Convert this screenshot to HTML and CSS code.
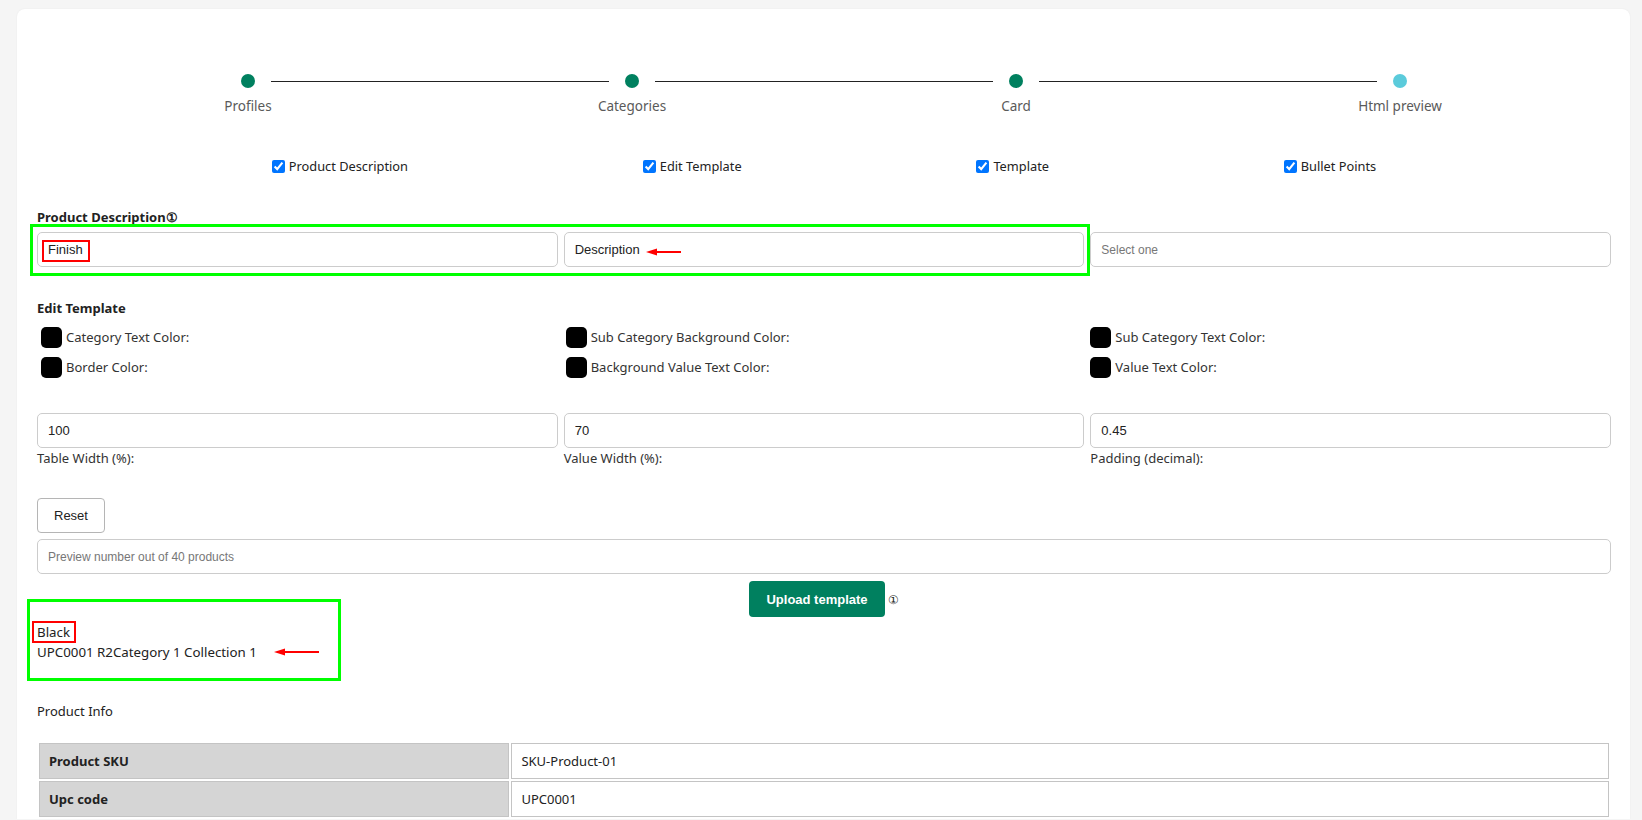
FILE: index.html
```html
<!DOCTYPE html>
<html lang="en">
<head>
	<meta charset="UTF-8">
	<title>Template preview</title>
	<link rel="stylesheet" href="styles.css">
</head>
<body>
	<section class="card">
		<ul class="stepper">
			<li class="step done"><span class="dot"></span><span class="step-name">Profiles</span></li>
			<li class="step done"><span class="dot"></span><span class="step-name">Categories</span></li>
			<li class="step done"><span class="dot"></span><span class="step-name">Card</span></li>
			<li class="step current"><span class="dot"></span><span class="step-name">Html preview</span></li>
		</ul>

		<div class="checks">
			<label class="check"><input type="checkbox" checked>Product Description</label>
			<label class="check"><input type="checkbox" checked>Edit Template</label>
			<label class="check"><input type="checkbox" checked>Template</label>
			<label class="check"><input type="checkbox" checked>Bullet Points</label>
		</div>

		<h4 class="title">Product Description&#9312;</h4>
		<div class="grid3 desc-row">
			<input class="field" type="text" value="Finish">
			<input class="field" type="text" value="Description">
			<input class="field" type="text" placeholder="Select one">
			<!-- annotation marks -->
			<div class="mark-green desc-mark"></div>
			<div class="mark-red finish-mark"></div>
			<svg class="arrow desc-arrow" width="36" height="10" viewBox="0 0 36 10"><path d="M10 5H35" stroke="#f00" stroke-width="2"/><path d="M0 5L11 1.5V8.5Z" fill="#f00"/></svg>
		</div>

		<h4 class="title title-edit">Edit Template</h4>
		<div class="grid3 colors">
			<div class="color-item"><span class="swatch"></span>Category Text Color:</div>
			<div class="color-item"><span class="swatch"></span>Sub Category Background Color:</div>
			<div class="color-item"><span class="swatch"></span>Sub Category Text Color:</div>
			<div class="color-item"><span class="swatch"></span>Border Color:</div>
			<div class="color-item"><span class="swatch"></span>Background Value Text Color:</div>
			<div class="color-item"><span class="swatch"></span>Value Text Color:</div>
		</div>

		<div class="grid3 sizes">
			<input class="field" type="text" value="100">
			<input class="field" type="text" value="70">
			<input class="field" type="text" value="0.45">
			<span class="field-label">Table Width (%):</span>
			<span class="field-label">Value Width (%):</span>
			<span class="field-label">Padding (decimal):</span>
		</div>

		<button class="btn btn-reset">Reset</button>
		<input class="field field-wide" type="text" placeholder="Preview number out of 40 products">

		<div class="upload-row">
			<button class="btn btn-upload">Upload template</button>
			<span class="info">&#9312;</span>
		</div>

		<div class="result">
			<div class="result-line">Black</div>
			<div class="result-line">UPC0001 R2Category 1 Collection 1</div>
			<div class="mark-green result-mark"></div>
			<div class="mark-red black-mark"></div>
			<svg class="arrow result-arrow" width="46" height="10" viewBox="0 0 46 10"><path d="M10 5H45" stroke="#f00" stroke-width="2"/><path d="M0 5L11 1.5V8.5Z" fill="#f00"/></svg>
		</div>

		<p class="info-title">Product Info</p>
		<table class="info-table">
			<tr><th>Product SKU</th><td>SKU-Product-01</td></tr>
			<tr><th>Upc code</th><td>UPC0001</td></tr>
		</table>
	</section>
</body>
</html>
```

FILE: styles.css
```css
body{
	margin:0;
	background:#f5f5f5;
	font-family:"Noto Sans","Open Sans",sans-serif;
	color:#222;
}
ul,li{
	margin:0;
	padding:0;
	list-style:none;
}
.card{
	margin:9px 12px 0 17px;
	padding:0 19px 0 20px;
	background:#fff;
	border-radius:8px 8px 0 0;
	box-shadow:0 0 2px rgba(0,0,0,0.06);
}

/* stepper */
.stepper{
	display:flex;
	margin:0 19px;
	padding-top:65px;
}
.step{
	position:relative;
	flex:1;
	display:flex;
	flex-direction:column;
	align-items:center;
}
.step::after{
	content:'';
	position:absolute;
	top:7px;
	left:calc(50% + 23px);
	right:calc(-50% + 23px);
	height:1px;
	background:#222;
}
.step:last-child::after{
	display:none;
}
.dot{
	width:14px;
	height:14px;
	border-radius:50%;
	background:#00805f;
}
.step.current .dot{
	background:#5bcbdb;
}
.step-name{
	margin-top:8px;
	font-size:13.5px;
	line-height:20px;
	color:#5a5a5a;
}

/* checkbox row */
.checks{
	display:flex;
	justify-content:space-evenly;
	margin-top:40px;
}
.check{
	display:flex;
	align-items:center;
	font-size:12.8px;
	line-height:20px;
}
.check input{
	width:13px;
	height:13px;
	margin:0 4px 0 0;
}

.title{
	margin:32px 0 0;
	font-size:13px;
	line-height:18px;
	font-weight:bold;
}
.grid3{
	display:grid;
	grid-template-columns:1fr 1fr 1fr;
}
.desc-row{
	position:relative;
	column-gap:6px;
	margin-top:6px;
}
.field{
	min-width:0;
	height:35px;
	padding:0 10px;
	box-sizing:border-box;
	border:1px solid #ccc;
	border-radius:5px;
	font-family:"Liberation Sans",Arial,sans-serif;
	font-size:13px;
	color:#222;
	outline:none;
}
.field::placeholder{
	color:#777;
	font-size:12px;
}

/* annotation marks */
.mark-green{
	position:absolute;
	border:3px solid #00ff00;
	box-sizing:border-box;
}
.mark-red{
	position:absolute;
	border:2px solid #f00;
	box-sizing:border-box;
}
.arrow{
	position:absolute;
}
.desc-mark{
	left:-7px;
	top:-8px;
	width:1060px;
	height:52px;
}
.finish-mark{
	left:5px;
	top:8px;
	width:48px;
	height:22px;
}
.desc-arrow{
	left:609px;
	top:15px;
}

.title-edit{
	margin-top:32px;
}
.colors{
	margin-top:10px;
	row-gap:9px;
}
.color-item{
	display:flex;
	align-items:center;
	padding-left:4px;
	font-size:13px;
	line-height:21px;
	color:#333;
}
.swatch{
	width:21px;
	height:21px;
	margin-right:4px;
	border-radius:5px;
	background:#000;
}

.sizes{
	column-gap:6px;
	margin-top:35px;
}
.field-label{
	margin-top:1px;
	font-size:13px;
	line-height:18px;
	color:#333;
}

.btn{
	height:35px;
	border-radius:4px;
	font-family:"Liberation Sans",Arial,sans-serif;
	font-size:13px;
	cursor:pointer;
}
.btn-reset{
	display:block;
	margin-top:31px;
	padding:0 16px;
	border:1px solid #b5b5b5;
	background:#fff;
	color:#222;
}
.field-wide{
	display:block;
	width:100%;
	margin-top:6px;
}
.upload-row{
	display:flex;
	justify-content:center;
	align-items:center;
	margin-top:7px;
}
.btn-upload{
	height:36px;
	padding:0 17px;
	border:none;
	background:#00805f;
	color:#fff;
	font-weight:bold;
}
.info{
	margin-left:3px;
	font-size:12px;
}

.result{
	position:relative;
	margin-top:5px;
}
.result-line{
	font-size:13.3px;
	line-height:20px;
}
.result-mark{
	left:-10px;
	top:-23px;
	width:314px;
	height:82px;
}
.black-mark{
	left:-5px;
	top:-1px;
	width:44px;
	height:22px;
}
.result-arrow{
	left:237px;
	top:25px;
}

.info-title{
	margin:39px 0 0;
	font-size:13px;
	line-height:20px;
}
.info-table{
	width:100%;
	margin-top:20px;
	border-spacing:2px;
	font-size:13px;
}
.info-table th,
.info-table td{
	height:36px;
	padding:0 9px;
	box-sizing:border-box;
	border:1px solid #c4c4c4;
	text-align:left;
}
.info-table th{
	width:30%;
	background:#d5d5d5;
}
```
